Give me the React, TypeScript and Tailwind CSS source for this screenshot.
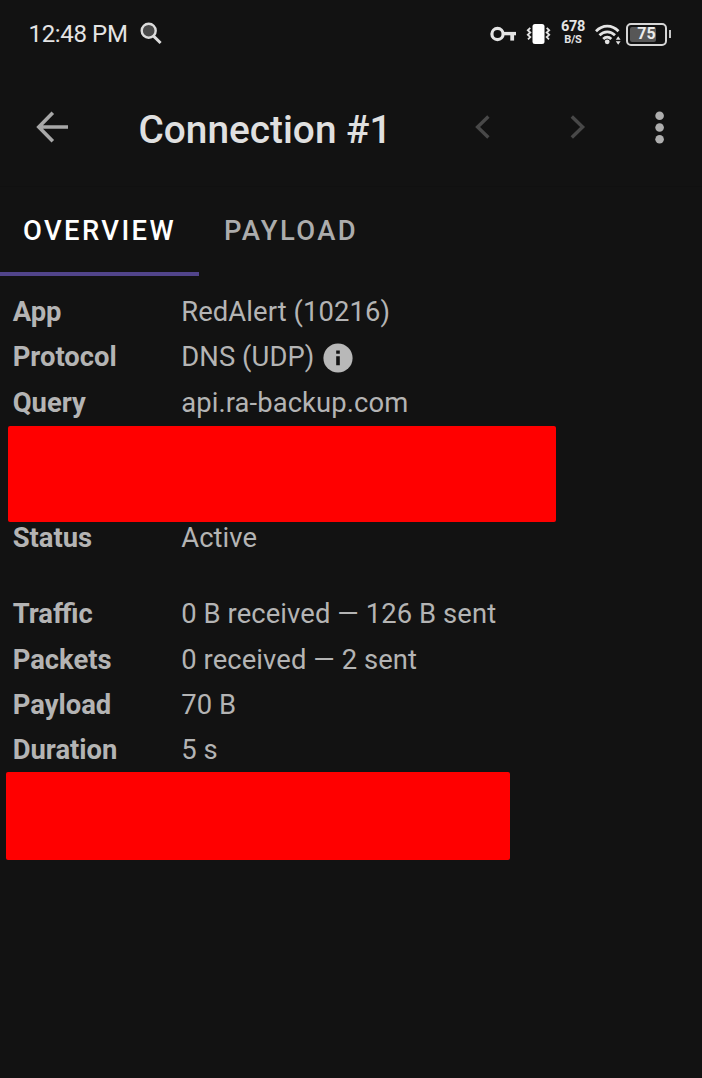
import React from 'react';

interface DetailRowProps {
  label: string;
  children: React.ReactNode;
}

const DetailRow: React.FC<DetailRowProps> = ({ label, children }) => {
  return (
    <div className="flex items-center h-[45.1px] pl-[12.7px] pt-[1px]">
      <dt className="w-[168.5px] shrink-0 font-bold">{label}</dt>
      <dd className="flex items-center whitespace-nowrap tracking-[0.09px]">{children}</dd>
    </div>
  );
};

const StatusBar: React.FC = () => {
  return (
    <div className="flex items-center justify-between h-[68px] pl-[28.5px] pr-[31px] text-[#e4e4e4]">
      <div className="flex items-center gap-[12.5px]">
        <span className="text-[24px] leading-none tracking-[-0.35px] whitespace-nowrap">12:48 PM</span>
        <svg className="w-[23px] h-[24px]" viewBox="0 0 23 24" fill="none">
          <circle cx="8.7" cy="8.7" r="7" fill="#4a4a4a" stroke="#dcdcdc" strokeWidth="2.4" />
          <path d="M13.6 14.2l7 6.8" stroke="#dcdcdc" strokeWidth="3" />
        </svg>
      </div>

      <div className="flex items-center">
        {/* VPN key */}
        <svg className="w-[27px] h-[16px]" viewBox="0 0 27 16" fill="none" stroke="currentColor">
          <circle cx="7.5" cy="8" r="5.6" strokeWidth="3.2" />
          <path d="M13 7.6h13" strokeWidth="3.4" />
          <path d="M22.2 8v6.6" strokeWidth="3.8" />
        </svg>
        {/* Vibrate */}
        <svg className="w-[25px] h-[22px] ml-[9px]" viewBox="0 0 25 22">
          <rect x="6.5" y="1" width="12" height="20" rx="2.5" fill="#fff" />
          <path
            d="M4.3 4.8L1.8 7.3l2.5 2.2-2.5 2.3 2.5 2.3-2.3 2.2M20.7 4.8l2.5 2.5-2.5 2.2 2.5 2.3-2.5 2.3 2.3 2.2"
            fill="none"
            stroke="currentColor"
            strokeWidth="1.8"
          />
        </svg>
        <div className="flex flex-col items-center w-[26px] ml-[9.5px] pb-[4px] font-bold">
          <span className="text-[14.5px] leading-[14px] tracking-[-0.4px]">678</span>
          <span className="text-[11px] leading-[11px] tracking-[-0.2px]">B/S</span>
        </div>
        {/* Wi-Fi with activity arrows */}
        <svg className="w-[26px] h-[21px] ml-[9px]" viewBox="0 0 26 21" fill="none">
          <g stroke="currentColor" strokeWidth="2.7">
            <path d="M1 7.2C7.5 .4 17.1.4 23.5 7.2" />
            <path d="M4.5 11.3c4.5-4.6 11-4.6 15.5 0" />
            <path d="M8.2 15c2.4-2.4 5.7-2.4 8.1 0" />
          </g>
          <circle cx="12.2" cy="17.8" r="2.4" fill="currentColor" />
          <path d="M23.2 12.2l2.4 3.6h-4.8zM23.2 20.8l2.4-3.6h-4.8z" fill="currentColor" />
        </svg>
        <div className="flex items-center ml-[5px]">
          <div className="relative flex items-center justify-center w-[41px] h-[23px] rounded-[5px] border-2 border-[#d6d6d6]">
            <div className="absolute left-[2px] top-[2px] h-[15px] w-[26px] rounded-[2px] bg-[#575757]" />
            <span className="relative text-[16px] leading-none font-bold text-[#ececec]">75</span>
          </div>
          <div className="w-[2.5px] h-[8px] ml-[1.5px] bg-[#c6c6c6]" />
        </div>
      </div>
    </div>
  );
};

const AppBar: React.FC = () => {
  return (
    <header className="flex items-center h-[118px] pl-[36px] pr-[37px]">
      <button aria-label="Back">
        <svg className="w-[33px] h-[32px]" viewBox="0 0 33 32" fill="none" stroke="#a8a8a8" strokeWidth="3.6">
          <path d="M16.8 1.7L2.8 16l14 14.3M2.8 16H32" />
        </svg>
      </button>
      <h1 className="w-[260px] ml-[69.5px] pt-[6px] text-[38.8px] leading-none font-medium whitespace-nowrap text-[#e0e0e0]">
        Connection #1
      </h1>
      <button aria-label="Previous" className="ml-[76.5px]">
        <svg className="w-[16px] h-[24px]" viewBox="0 0 16 24" fill="none" stroke="#484848" strokeWidth="3.4">
          <path d="M13.4 1.5L2.6 12l10.8 10.5" />
        </svg>
      </button>
      <button aria-label="Next" className="ml-[79px]">
        <svg className="w-[16px] h-[24px]" viewBox="0 0 16 24" fill="none" stroke="#484848" strokeWidth="3.4">
          <path d="M1.8 1.5L12.6 12 1.8 22.5" />
        </svg>
      </button>
      <button aria-label="More options" className="ml-auto">
        <svg className="w-[10px] h-[33px]" viewBox="0 0 10 33" fill="#aeaeae">
          <circle cx="4.6" cy="4.7" r="4.3" />
          <circle cx="4.6" cy="16.5" r="4.3" />
          <circle cx="4.6" cy="28.3" r="4.3" />
        </svg>
      </button>
    </header>
  );
};

const App: React.FC = () => {
  return (
    <div className="min-h-screen bg-[#121212] font-['Roboto',sans-serif] text-[#b4b4b4]">
      <StatusBar />
      <AppBar />

      <nav className="flex h-[90px] text-[27.4px] font-medium tracking-[2.4px] border-t border-[#101010]">
        <button className="w-[199px] pt-[4px] border-b-[4px] border-[#51448a] text-white">OVERVIEW</button>
        <button className="w-[184px] pt-[4px] border-b-[4px] border-transparent text-[#acacac]">PAYLOAD</button>
      </nav>

      <dl className="pt-[14px] text-[27.4px] leading-none">
        <DetailRow label="App">RedAlert (10216)</DetailRow>
        <DetailRow label="Protocol">
          DNS (UDP)
          <svg className="w-[30px] h-[30px] -mt-[1px] ml-[8.5px]" viewBox="0 0 30 30">
            <circle cx="15" cy="15" r="14.6" fill="#b8b8b8" />
            <path d="M13.2 7.5h3.6v3.2h-3.6zM13.2 13.2h3.6v9h-3.6z" fill="#121212" />
          </svg>
        </DetailRow>
        <DetailRow label="Query">api.ra-backup.com</DetailRow>
        <div className="w-[548px] h-[96px] mt-[0.7px] ml-[8px] rounded-[2px] bg-[#ff0000]" />
        <div className="-mt-[6px]">
          <DetailRow label="Status">Active</DetailRow>
        </div>
        <div className="mt-[31px]">
          <DetailRow label="Traffic">0 B received — 126 B sent</DetailRow>
          <DetailRow label="Packets">0 received — 2 sent</DetailRow>
          <DetailRow label="Payload">70 B</DetailRow>
          <DetailRow label="Duration">5 s</DetailRow>
        </div>
        <div className="w-[504px] h-[88px] ml-[6px] -mt-[0.5px] rounded-[2px] bg-[#ff0000]" />
      </dl>
    </div>
  );
};

export default App;
